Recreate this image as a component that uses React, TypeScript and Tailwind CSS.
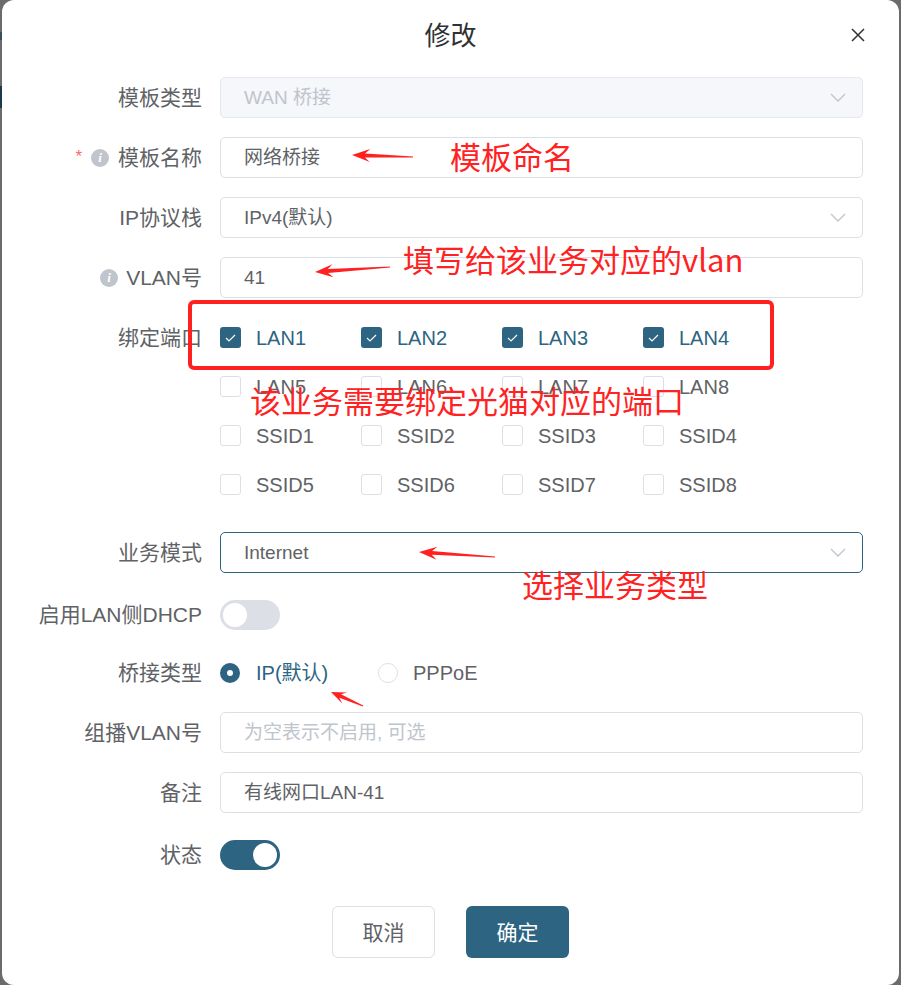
import React from 'react';

function arrowPts(tx: number, ty: number, sx: number, sy: number, H = 18, W = 6.5) {
  const dx = sx - tx;
  const dy = sy - ty;
  const L = Math.hypot(dx, dy);
  const ux = dx / L;
  const uy = dy / L;
  const nx = -uy;
  const ny = ux;
  const f = (a: number, b: number) => `${a.toFixed(1)},${b.toFixed(1)}`;
  const wx = tx + ux * H;
  const wy = ty + uy * H;
  const kx = tx + ux * (H - 5);
  const ky = ty + uy * (H - 5);
  return [
    f(tx, ty),
    f(wx + nx * W, wy + ny * W),
    f(kx + nx * 2, ky + ny * 2),
    f(sx + nx * 0.6, sy + ny * 0.6),
    f(sx - nx * 0.6, sy - ny * 0.6),
    f(kx - nx * 2, ky - ny * 2),
    f(wx - nx * W, wy - ny * W),
  ].join(' ');
}

function Chevron() {
  return (
    <svg width="16" height="9" viewBox="0 0 16 9" fill="none">
      <path d="M1 1 L8 8 L15 1" stroke="#c0c4cc" strokeWidth="1.3" />
    </svg>
  );
}

function InfoIcon() {
  return (
    <span className="flex h-[18px] w-[18px] items-center justify-center rounded-full bg-[#c0c4cc] font-['Liberation_Serif',serif] text-[13px] font-bold italic leading-none text-white">
      i
    </span>
  );
}

function Label({ children }: { children: React.ReactNode }) {
  return (
    <div className="flex w-[218px] shrink-0 items-center justify-end pr-[18px] text-[21px] leading-none text-[#606266]">
      {children}
    </div>
  );
}

function Row({ label, children, cls }: { label: React.ReactNode; children: React.ReactNode; cls: string }) {
  return (
    <div className={cls}>
      <Label>{label}</Label>
      {children}
    </div>
  );
}

function Checkbox({ label, checked }: { label: string; checked?: boolean }) {
  return (
    <div className="flex items-center gap-[15px]">
      {checked ? (
        <span className="flex h-[21px] w-[21px] items-center justify-center rounded-[3px] bg-[#2c6482]">
          <svg width="11" height="8" viewBox="0 0 11 8" fill="none">
            <path d="M1 4 L4 7 L10 1" stroke="white" strokeWidth="1.2" />
          </svg>
        </span>
      ) : (
        <span className="h-[21px] w-[21px] rounded-[3px] border border-[#dcdfe6] bg-white" />
      )}
      <span className={checked ? 'text-[20px] leading-none text-[#2c6482]' : 'text-[20px] leading-none text-[#606266]'}>{label}</span>
    </div>
  );
}

const groups = [
  ['LAN1', 'LAN2', 'LAN3', 'LAN4'],
  ['LAN5', 'LAN6', 'LAN7', 'LAN8'],
  ['SSID1', 'SSID2', 'SSID3', 'SSID4'],
  ['SSID5', 'SSID6', 'SSID7', 'SSID8'],
];

export default function App() {
  const rowCls = 'flex h-[41px] items-center mb-[19px]';
  const inputCls =
    'flex h-full flex-1 items-center justify-between rounded-[5px] border border-[#dcdfe6] pl-[23px] pr-[16px] text-[19px] leading-none text-[#606266]';
  return (
    <div className="relative flex h-[985px] w-[901px] overflow-hidden bg-[#6b6b6b] font-['Liberation_Sans','Noto_Sans_CJK_SC',sans-serif]">
      <div className="flex w-[2px] shrink-0 flex-col">
        <div className="h-[32px]" />
        <div className="h-[8px] bg-[#3e4e59]" />
        <div className="h-[46px]" />
        <div className="h-[22px] bg-[#1d3a48]" />
      </div>

      <div className="flex h-[985px] w-[897px] shrink-0 flex-col rounded-[12px] bg-white">
        <div className="relative flex h-[72px] items-center justify-center">
          <span className="text-[26px] leading-none text-[#303133]">修改</span>
          <button className="absolute right-[34px] top-[28px] h-[14px] w-[14px]">
            <svg width="14" height="14" viewBox="0 0 14 14" fill="none">
              <path d="M1 1 L13 13 M13 1 L1 13" stroke="#303133" strokeWidth="1.5" />
            </svg>
          </button>
        </div>

        <div className="flex flex-col pr-[36px] pt-[5px]">
          <Row label="模板类型" cls={rowCls}>
            <div className="flex h-full flex-1 items-center justify-between rounded-[5px] border border-[#e4e7ed] bg-[#f5f7fa] pl-[23px] pr-[16px] text-[19px] leading-none text-[#c0c4cc]">
              <span>WAN 桥接</span>
              <Chevron />
            </div>
          </Row>

          <Row
            cls={rowCls}
            label={
              <span className="flex items-center">
                <span className="mb-[2px] mr-[9px] text-[17px] text-[#f56c6c]">*</span>
                <span className="mr-[9px]">
                  <InfoIcon />
                </span>
                <span>模板名称</span>
              </span>
            }
          >
            <div className={inputCls}>
              <span>网络桥接</span>
            </div>
          </Row>

          <Row label="IP协议栈" cls={rowCls}>
            <div className={inputCls}>
              <span>IPv4(默认)</span>
              <Chevron />
            </div>
          </Row>

          <Row
            cls={rowCls}
            label={
              <span className="flex items-center">
                <span className="mr-[8px]">
                  <InfoIcon />
                </span>
                <span>VLAN号</span>
              </span>
            }
          >
            <div className={inputCls}>
              <span>41</span>
            </div>
          </Row>

          <div className="mb-[27px] flex items-start">
            <div className="flex h-[41px] items-center">
              <Label>绑定端口</Label>
            </div>
            <div className="flex flex-col gap-[8px]">
              {groups.map((g, i) => (
                <div key={i} className="grid h-[41px] grid-cols-[141px_141px_141px_141px] items-center">
                  {g.map((name) => (
                    <Checkbox key={name} label={name} checked={i === 0} />
                  ))}
                </div>
              ))}
            </div>
          </div>

          <Row label="业务模式" cls="flex h-[41px] items-center mb-[21px]">
            <div className="flex h-full flex-1 items-center justify-between rounded-[5px] border border-[#2c6482] pl-[23px] pr-[16px] text-[19px] leading-none text-[#606266]">
              <span>Internet</span>
              <Chevron />
            </div>
          </Row>

          <Row label="启用LAN侧DHCP" cls="flex h-[41px] items-center mb-[17px]">
            <div className="flex h-[30px] w-[60px] items-center rounded-full bg-[#dcdfe6] p-[3px]">
              <span className="h-[24px] w-[24px] rounded-full bg-white" />
            </div>
          </Row>

          <Row label="桥接类型" cls={rowCls}>
            <div className="flex items-center">
              <div className="flex w-[158px] items-center gap-[16px]">
                <span className="flex h-[20px] w-[20px] items-center justify-center rounded-full bg-[#2c6482]">
                  <span className="h-[6px] w-[6px] rounded-full bg-white" />
                </span>
                <span className="text-[20px] leading-none text-[#2c6482]">IP(默认)</span>
              </div>
              <div className="flex items-center gap-[15px]">
                <span className="h-[20px] w-[20px] rounded-full border border-[#dcdfe6] bg-white" />
                <span className="text-[20px] leading-none text-[#606266]">PPPoE</span>
              </div>
            </div>
          </Row>

          <Row label="组播VLAN号" cls={rowCls}>
            <div className={inputCls}>
              <span className="text-[#c0c4cc]">为空表示不启用, 可选</span>
            </div>
          </Row>

          <Row label="备注" cls="flex h-[41px] items-center mb-[21px]">
            <div className={inputCls}>
              <span>有线网口LAN-41</span>
            </div>
          </Row>

          <Row label="状态" cls="flex h-[41px] items-center">
            <div className="flex h-[30px] w-[60px] items-center justify-end rounded-full bg-[#2c6482] p-[3px]">
              <span className="h-[24px] w-[24px] rounded-full bg-white" />
            </div>
          </Row>
        </div>

        <div className="mt-[31px] flex justify-center gap-[31px]">
          <button className="flex h-[52px] w-[103px] items-center justify-center rounded-[6px] border border-[#dcdfe6] bg-white text-[21px] leading-none text-[#606266]">
            取消
          </button>
          <button className="flex h-[52px] w-[103px] items-center justify-center rounded-[6px] bg-[#2c6482] text-[21px] leading-none text-white">
            确定
          </button>
        </div>
      </div>
      <div className="w-[2px] shrink-0" />

      <div className="pointer-events-none absolute inset-0 font-['Noto_Sans_CJK_SC',sans-serif] text-[31px] leading-none text-[#ff2222]">
        <span className="absolute left-[450px] top-[140px] whitespace-nowrap">模板命名</span>
        <span className="absolute left-[403px] top-[243px] whitespace-nowrap">填写给该业务对应的vlan</span>
        <span className="absolute left-[250px] top-[384px] whitespace-nowrap">该业务需要绑定光猫对应的端口</span>
        <span className="absolute left-[522px] top-[568px] whitespace-nowrap">选择业务类型</span>
        <div className="absolute left-[188px] top-[300px] h-[70px] w-[586px] rounded-[6px] border-[4px] border-[#ff2020]" />
        <svg className="absolute left-0 top-0" width="901" height="985" viewBox="0 0 901 985">
          <polygon points={arrowPts(352, 155, 413, 157)} fill="#ff2020" />
          <polygon points={arrowPts(315, 272, 390, 267)} fill="#ff2020" />
          <polygon points={arrowPts(419, 552, 495, 557)} fill="#ff2020" />
          <polygon points={arrowPts(331, 692, 363, 706, 15, 6)} fill="#ff2020" />
        </svg>
      </div>
    </div>
  );
}
